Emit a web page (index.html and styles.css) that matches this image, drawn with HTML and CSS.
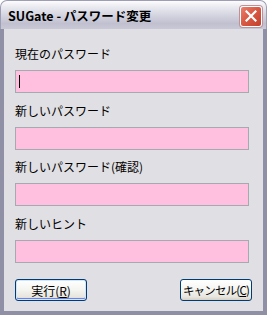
FILE: index.html
```html
<!DOCTYPE html>
<html lang="ja">
<head>
    <meta charset="UTF-8">
    <title>SUGate - パスワード変更</title>
    <link rel="stylesheet" href="styles.css">
</head>
<body>
    <div class="window">
        <div class="titlebar">
            <span class="title">SUGate - パスワード変更</span>
            <button class="close-btn" aria-label="閉じる">
                <svg width="12" height="12" viewBox="0 0 12 12">
                    <path d="M1.5 1.5 L10.5 10.5 M10.5 1.5 L1.5 10.5" stroke="#ffffff" stroke-width="2.2" stroke-linecap="square"/>
                </svg>
            </button>
        </div>
        <div class="client">
            <div class="fields">
                <div class="field">
                    <label>現在のパスワード</label>
                    <div class="textbox"><span class="caret"></span></div>
                </div>
                <div class="field">
                    <label>新しいパスワード</label>
                    <div class="textbox"></div>
                </div>
                <div class="field">
                    <label>新しいパスワード(確認)</label>
                    <div class="textbox"></div>
                </div>
                <div class="field">
                    <label>新しいヒント</label>
                    <div class="textbox"></div>
                </div>
            </div>
            <div class="buttons">
                <button class="btn default">実行(<u>R</u>)</button>
                <button class="btn narrow">キャンセル(<u>C</u>)</button>
            </div>
        </div>
    </div>
</body>
</html>
```

FILE: styles.css
```css
* {
    margin: 0;
    padding: 0;
    box-sizing: border-box;
}

body {
    background: #ffffff;
    font-family: "Noto Sans CJK JP", "Liberation Sans", sans-serif;
    font-size: 12px;
    color: #000000;
}

.window {
    width: 267px;
    height: 315px;
    display: flex;
    flex-direction: column;
}

.titlebar {
    height: 29px;
    display: flex;
    align-items: center;
    justify-content: space-between;
    padding: 0 4px 0 7px;
    border-radius: 7px 7px 0 0;
    border: 1px solid #9d9db5;
    border-bottom: none;
    background: linear-gradient(#fdfdfd 0%, #ececf2 18%, #d2d2de 55%, #c0c0d0 80%, #c8c8d6 100%);
}

.title {
    font-weight: bold;
    font-size: 12.5px;
    letter-spacing: 0;
    color: #000000;
    padding-top: 1px;
}

.close-btn {
    width: 22px;
    height: 21px;
    margin-top: 2px;
    border: 1px solid #ffffff;
    border-radius: 3px;
    background: linear-gradient(135deg, #e9806e 0%, #d95a45 45%, #c2402c 100%);
    box-shadow: 0 0 0 1px #b8939a;
    display: flex;
    align-items: center;
    justify-content: center;
}

.client {
    flex: 1;
    background: #e0dfe3;
    border: 4px solid #8f8fa6;
    border-top: none;
    padding: 17px 14px 0 11px;
}

.fields {
    display: flex;
    flex-direction: column;
    gap: 9.7px;
}

.field label {
    display: block;
    line-height: 16px;
    height: 16px;
    margin-bottom: 8px;
}

.textbox {
    height: 23px;
    background: #ffc0e0;
    border: 1px solid #a5aab0;
    padding: 4px 2px;
}

.caret {
    display: block;
    width: 1px;
    height: 13px;
    background: #000000;
    margin-left: 1px;
}

.buttons {
    display: flex;
    justify-content: space-between;
    margin-top: 16px;
    margin-right: -3px;
}

.btn {
    width: 72px;
    height: 22px;
    padding: 0;
    white-space: nowrap;
    font-family: inherit;
    font-size: 12px;
    border: 1px solid #003c74;
    border-radius: 3px;
    background: linear-gradient(#ffffff 0%, #f4f4f0 50%, #e6e5de 85%, #d6d0c5 100%);
    color: #000000;
}

.btn.narrow {
    letter-spacing: -0.8px;
    font-size: 11.5px;
}

.btn.default {
    box-shadow: inset 0 0 0 1px #cee7ff, inset 0 -1px 0 1px #6982ee;
}

.btn u {
    text-decoration: underline;
}
```
